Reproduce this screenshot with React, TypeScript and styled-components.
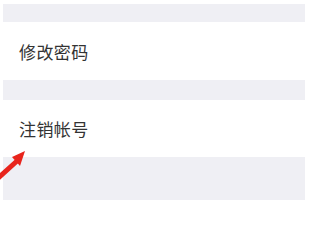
import React from 'react'
import styled, { createGlobalStyle } from 'styled-components'

const GlobalStyle = createGlobalStyle`
  html, body {
    margin: 0;
    padding: 0;
    background: #ffffff;
  }
  body {
    font-family: 'Noto Sans CJK SC', 'Noto Sans', sans-serif;
  }
`

const Page = styled.div`
  position: relative;
  width: 309px;
  height: 202px;
  overflow: hidden;
  padding: 4px 4px 0 3px;
  box-sizing: border-box;
  display: flex;
  flex-direction: column;
`

const Gap = styled.div<{ h: number }>`
  height: ${({ h }) => h}px;
  background: #efeff4;
  flex-shrink: 0;
`

const Row = styled.div<{ h: number }>`
  height: ${({ h }) => h}px;
  display: flex;
  align-items: center;
  padding-left: 16px;
  background: #ffffff;
  flex-shrink: 0;
`

const Label = styled.span`
  font-size: 17px;
  color: #333333;
  letter-spacing: 0.4px;
`

// red annotation arrow drawn over the list
const Arrow = styled.svg`
  position: absolute;
  left: 0;
  top: 148px;
`

export default function App() {
  return (
    <>
      <GlobalStyle />
      <Page>
        <Gap h={18} />
        <Row h={58}>
          <Label>修改密码</Label>
        </Row>
        <Gap h={20} />
        <Row h={57}>
          <Label>注销帐号</Label>
        </Row>
        <Gap h={43} />
        <Arrow width="30" height="40" viewBox="0 0 30 40">
          <path d="M-3 31 L17 13" stroke="#e8241c" strokeWidth="5" strokeLinecap="round" />
          <polygon points="25,3 12,9 20,18" fill="#e8241c" />
        </Arrow>
      </Page>
    </>
  )
}
